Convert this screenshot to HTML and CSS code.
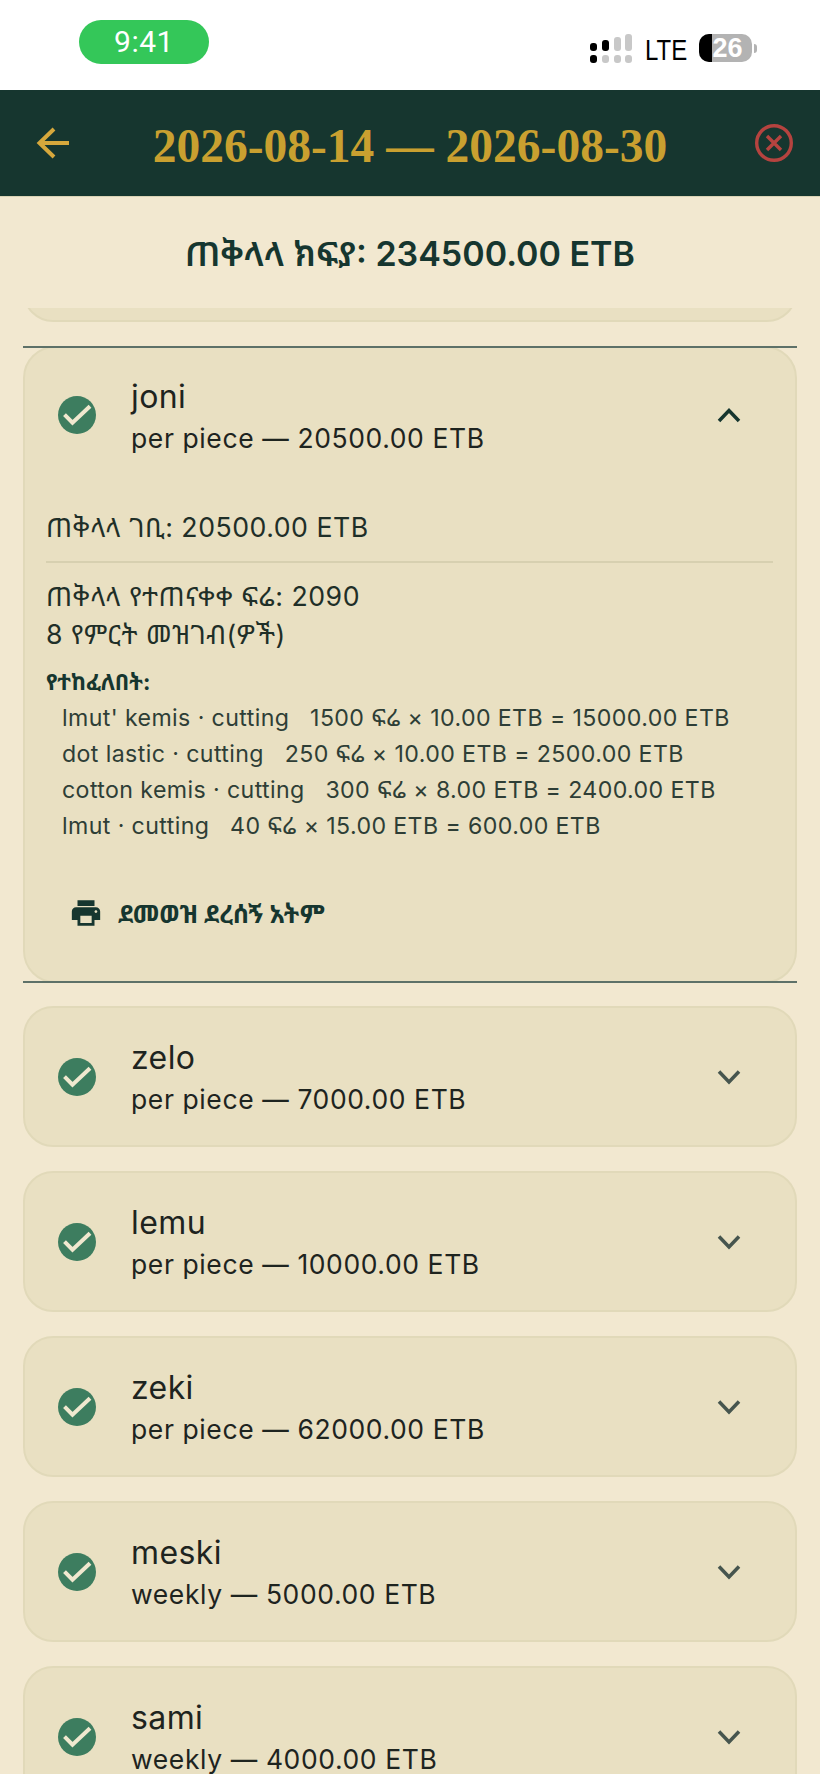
FILE: index.html
```html
<!DOCTYPE html>
<html lang="am">
<head>
<meta charset="utf-8">
<title>Payroll</title>
<link rel="stylesheet" href="styles.css">
</head>
<body>
<div class="status">
  <div class="pill">9:41</div>
  <div class="status-right">
    <svg class="signal" width="42" height="29" viewBox="0 0 42 29"><g fill="#c8c8c8"><rect x="24" y="3" width="7" height="14" rx="3"/><rect x="35" y="0" width="7" height="17" rx="3"/><rect x="12" y="21" width="7" height="8" rx="3"/><rect x="24" y="21" width="7" height="8" rx="3"/><rect x="35" y="21" width="7" height="8" rx="3"/></g><g fill="#000"><rect x="0" y="9" width="7" height="8" rx="3"/><rect x="12" y="6" width="7" height="11" rx="3"/><rect x="0" y="21" width="7" height="8" rx="3"/></g></svg>
    <span class="lte">LTE</span>
    <div class="battery"><div class="battery-fill"></div><span class="battery-num">26</span></div>
    <div class="battery-tip"></div>
  </div>
</div>
<header class="appbar">
  <svg class="back" width="34" height="32" viewBox="0 0 34 32"><path d="M33 16H4M18 2 3.500 16 18 30" fill="none" stroke="#d6a83c" stroke-width="4"/></svg>
  <h1 class="title">2026-08-14 — 2026-08-30</h1>
  <svg class="close" width="38" height="38" viewBox="0 0 38 38"><circle cx="19" cy="19" r="17.300" fill="none" stroke="#b5433f" stroke-width="3.400"/><path d="M12 12l14 14M26 12 12 26" stroke="#b5433f" stroke-width="3.400"/></svg>
</header>
<main class="content">
  <div class="total">ጠቅላላ ክፍያ: 234500.00 ETB</div>
  <div class="stub"></div>
  <section class="card open">
    <div class="row">
      <svg class="ok" width="38" height="38" viewBox="0 0 38 38"><circle cx="19" cy="19" r="19" fill="#3d7d5f"/><path d="M6.500 18.700l8 8L32 10.300" fill="none" stroke="#f0e8cf" stroke-width="4"/></svg>
      <div class="who"><div class="name">joni</div><div class="sub">per piece — 20500.00 ETB</div></div>
      <svg class="chev" width="24" height="16" viewBox="0 0 24 16"><path d="M2 14 12 3.500 22 14" fill="none" stroke="#16362f" stroke-width="3.500"/></svg>
    </div>
    <div class="details">
      <div class="line income">ጠቅላላ ገቢ: 20500.00 ETB</div>
      <div class="rule"></div>
      <div class="line">ጠቅላላ የተጠናቀቀ ፍሬ: 2090</div>
      <div class="line">8 የምርት መዝገብ(ዎች)</div>
      <div class="paid">የተከፈለበት:</div>
      <ul class="items">
        <li>lmut' kemis · cutting &nbsp; 1500 ፍሬ × 10.00 ETB = 15000.00 ETB</li>
        <li>dot lastic · cutting &nbsp; 250 ፍሬ × 10.00 ETB = 2500.00 ETB</li>
        <li>cotton kemis · cutting &nbsp; 300 ፍሬ × 8.00 ETB = 2400.00 ETB</li>
        <li>lmut · cutting &nbsp; 40 ፍሬ × 15.00 ETB = 600.00 ETB</li>
      </ul>
      <div class="print">
        <svg width="34" height="34" viewBox="0 0 24 24"><path fill="#16362f" d="M19 8H5c-1.660 0-3 1.340-3 3v6h4v4h12v-4h4v-6c0-1.660-1.340-3-3-3zm-3 11H8v-5h8v5zm3-7c-.550 0-1-.450-1-1s.450-1 1-1 1 .450 1 1-.450 1-1 1zm-1-9H6v4h12V3z"/></svg>
        <span>ደመወዝ ደረሰኝ አትም</span>
      </div>
    </div>
  </section>
  <div class="cards">
    <section class="card"><div class="row"><svg class="ok" width="38" height="38" viewBox="0 0 38 38"><circle cx="19" cy="19" r="19" fill="#3d7d5f"/><path d="M6.500 18.700l8 8L32 10.300" fill="none" stroke="#f0e8cf" stroke-width="4"/></svg><div class="who"><div class="name">zelo</div><div class="sub">per piece — 7000.00 ETB</div></div><svg class="chev" width="24" height="16" viewBox="0 0 24 16"><path d="M2 2.500 12 13 22 2.500" fill="none" stroke="#46554e" stroke-width="3.500"/></svg></div></section>
    <section class="card"><div class="row"><svg class="ok" width="38" height="38" viewBox="0 0 38 38"><circle cx="19" cy="19" r="19" fill="#3d7d5f"/><path d="M6.500 18.700l8 8L32 10.300" fill="none" stroke="#f0e8cf" stroke-width="4"/></svg><div class="who"><div class="name">lemu</div><div class="sub">per piece — 10000.00 ETB</div></div><svg class="chev" width="24" height="16" viewBox="0 0 24 16"><path d="M2 2.500 12 13 22 2.500" fill="none" stroke="#46554e" stroke-width="3.500"/></svg></div></section>
    <section class="card"><div class="row"><svg class="ok" width="38" height="38" viewBox="0 0 38 38"><circle cx="19" cy="19" r="19" fill="#3d7d5f"/><path d="M6.500 18.700l8 8L32 10.300" fill="none" stroke="#f0e8cf" stroke-width="4"/></svg><div class="who"><div class="name">zeki</div><div class="sub">per piece — 62000.00 ETB</div></div><svg class="chev" width="24" height="16" viewBox="0 0 24 16"><path d="M2 2.500 12 13 22 2.500" fill="none" stroke="#46554e" stroke-width="3.500"/></svg></div></section>
    <section class="card"><div class="row"><svg class="ok" width="38" height="38" viewBox="0 0 38 38"><circle cx="19" cy="19" r="19" fill="#3d7d5f"/><path d="M6.500 18.700l8 8L32 10.300" fill="none" stroke="#f0e8cf" stroke-width="4"/></svg><div class="who"><div class="name">meski</div><div class="sub">weekly — 5000.00 ETB</div></div><svg class="chev" width="24" height="16" viewBox="0 0 24 16"><path d="M2 2.500 12 13 22 2.500" fill="none" stroke="#46554e" stroke-width="3.500"/></svg></div></section>
    <section class="card"><div class="row"><svg class="ok" width="38" height="38" viewBox="0 0 38 38"><circle cx="19" cy="19" r="19" fill="#3d7d5f"/><path d="M6.500 18.700l8 8L32 10.300" fill="none" stroke="#f0e8cf" stroke-width="4"/></svg><div class="who"><div class="name">sami</div><div class="sub">weekly — 4000.00 ETB</div></div><svg class="chev" width="24" height="16" viewBox="0 0 24 16"><path d="M2 2.500 12 13 22 2.500" fill="none" stroke="#46554e" stroke-width="3.500"/></svg></div></section>
  </div>
</main>
</body>
</html>
```
FILE: styles.css
```css
* { box-sizing: border-box; }
html, body { margin: 0; height: 1774px; overflow: hidden; }
body { background: #f2e8d0; font-family: Inter, "Noto Sans", "Noto Sans Ethiopic", sans-serif; color: #16362f; }

.status { height: 90px; background: #fff; display: flex; justify-content: space-between; padding: 20px 63px 0 79px; }
.pill { width: 130px; height: 44px; border-radius: 22px; background: #34c759; color: #fff; font: 400 30px/43px Roboto, sans-serif; letter-spacing: .5px; text-align: center; }
.status-right { display: flex; align-items: flex-start; height: 29px; margin-top: 14px; }
.signal { display: block; flex: none; }
.lte { font: 500 30px/29px "Liberation Sans", sans-serif; color: #000; margin: 1px 0 0 13px; transform: scaleX(.8); transform-origin: left; width: 45px; }
.battery { position: relative; width: 53px; height: 28px; border-radius: 10px; background: #b3b3b3; overflow: hidden; margin-left: 9px; }
.battery-fill { width: 13px; height: 100%; background: #000; }
.battery-num { position: absolute; inset: 0; padding-left: 4px; text-align: center; font: 700 27px/28px "Liberation Sans", sans-serif; color: #fff; }
.battery-tip { width: 3px; height: 9px; background: #b3b3b3; border-radius: 0 3px 3px 0; margin: 10px 0 0 2px; }

.appbar { height: 107px; background: #16362f; display: flex; align-items: center; padding: 0 27px 0 36px; border-bottom: 1px solid #d9d3b5; }
.back { flex: none; }
.title { flex: 1; margin: 0; text-align: center; font: 700 47.500px/1 "Liberation Serif", serif; color: #c9a030; padding: 8px 5px 0 0; white-space: nowrap; }
.close { flex: none; }

.content { padding: 0 23px; }
.total { height: 111px; display: flex; align-items: center; justify-content: center; font-size: 34px; font-weight: 600; color: #16362f; }
.stub { height: 14px; overflow: hidden; display: flex; align-items: flex-end; }
.stub::before { content: ""; flex: 1; height: 70px; background: #e9e0c2; border: 2px solid #e1d9b9; border-radius: 30px; }

.card { background: #e9e0c2; border: 2px solid #e1d9b9; border-radius: 30px; margin-bottom: 24px; }
.card.open { margin-top: 24px; height: 637px; margin-bottom: 23px; position: relative; border-radius: 32px; }
.card.open::before, .card.open::after { content: ""; position: absolute; left: -2px; right: -2px; height: 2px; background: #5e7168; }
.card.open::before { top: -2px; }
.card.open::after { bottom: -2px; }
.row { height: 137px; display: flex; align-items: center; padding: 0 54px 0 33px; }
.card.open .row { height: 134px; }
.ok { flex: none; }
.who { flex: 1; margin-left: 35px; padding-top: 3px; color: #1e241f; }
.card.open .who { padding-top: 5px; }
.name { font-size: 32px; line-height: 42px; letter-spacing: .4px; }
.sub { font-size: 26.500px; line-height: 41px; letter-spacing: .6px; }
.chev { flex: none; }

.details { padding: 0 21px; }
.line { font-size: 26.700px; line-height: 38px; letter-spacing: .5px; color: #1f2f28; }
.income { margin-top: 26px; }
.rule { height: 2px; background: #d7d0b0; margin: 15px 1px 14px 0; }
.paid { font-size: 22.300px; font-weight: 700; line-height: 30px; margin-top: 14px; }
.items { list-style: none; margin: 3px 0 0; padding: 0 0 0 16px; }
.items li { font-size: 23.150px; line-height: 36px; letter-spacing: .4px; white-space: nowrap; color: #2e3e36; }
.print { display: flex; align-items: center; gap: 15px; margin: 52px 0 0 23px; font-size: 25.200px; font-weight: 700; }
.print svg { flex: none; }
```
